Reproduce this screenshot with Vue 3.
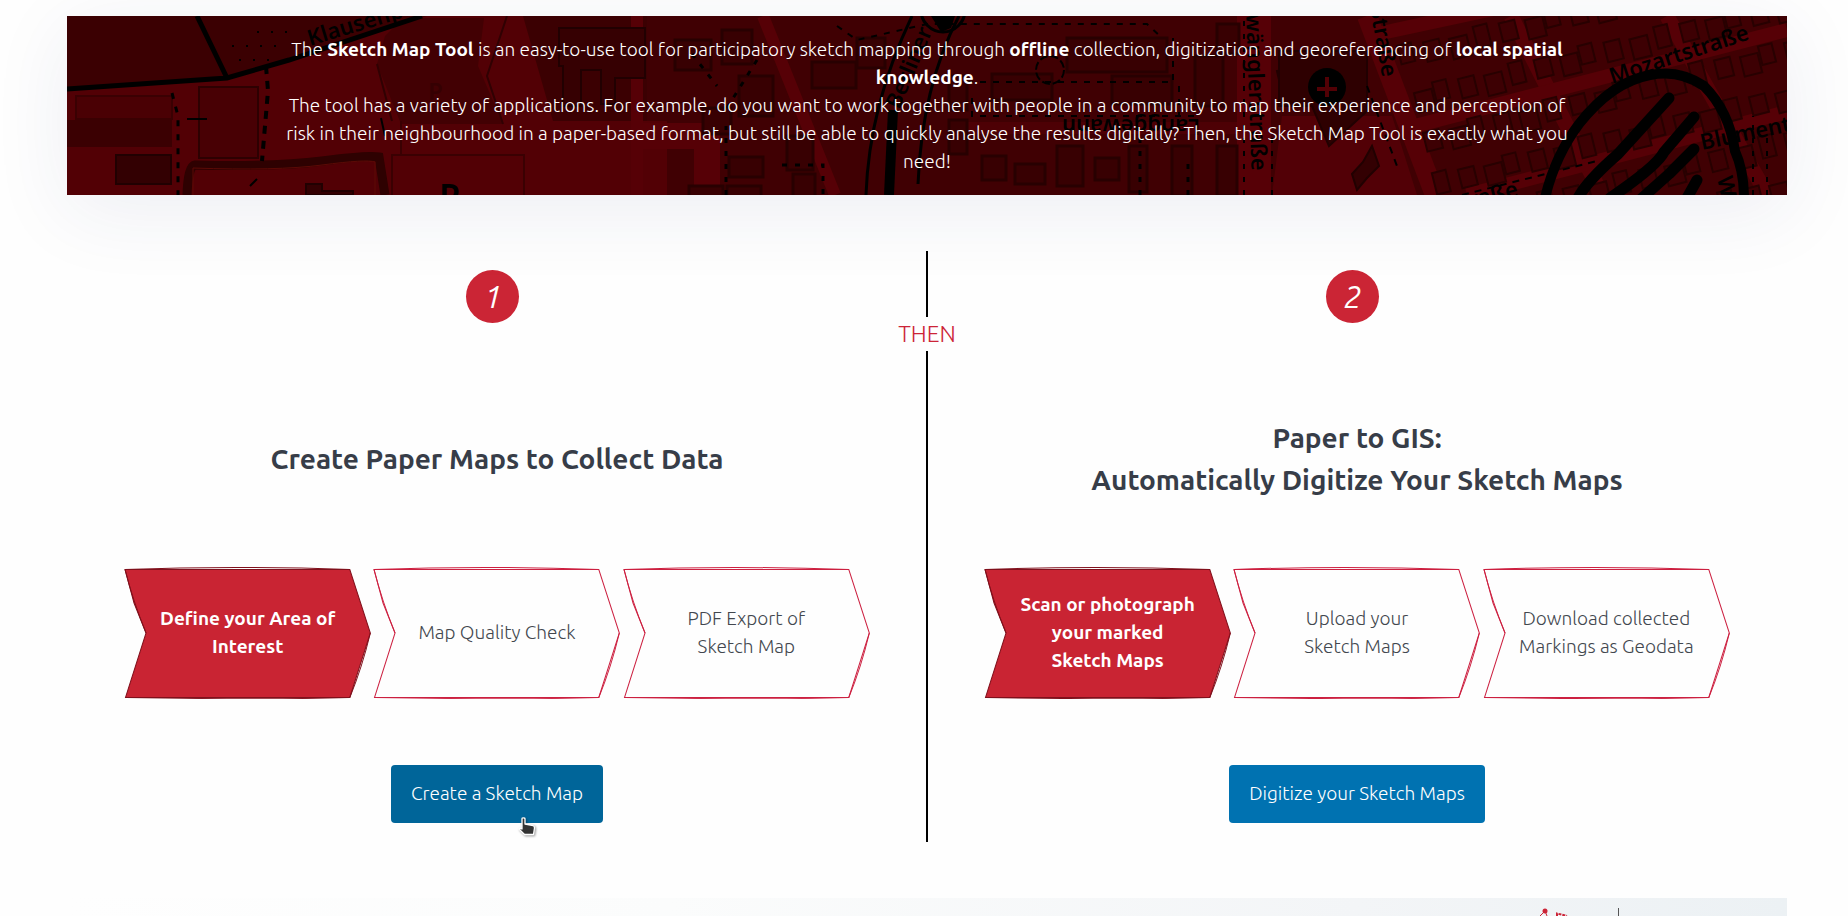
<script setup>
const columns = [
  {
    number: '1',
    title: ['Create Paper Maps to Collect Data'],
    steps: [
      ['Define your Area of', 'Interest'],
      ['Map Quality Check'],
      ['PDF Export of', 'Sketch Map'],
    ],
    action: 'Create a Sketch Map',
    hovered: true,
  },
  {
    number: '2',
    title: ['Paper to GIS:', 'Automatically Digitize Your Sketch Maps'],
    steps: [
      ['Scan or photograph', 'your marked', 'Sketch Maps'],
      ['Upload your', 'Sketch Maps'],
      ['Download collected', 'Markings as Geodata'],
    ],
    action: 'Digitize your Sketch Maps',
    hovered: false,
  },
]

// Rows of small houses along the tilted streets on the right side of the map.
const houses = []
for (let row = 0; row < 6; row++) {
  for (let i = 0; i < 17; i++) {
    const wobble = (i * 7 + row * 5) % 6
    houses.push({
      x: 1345 + i * 25 + wobble,
      y: 28 + row * 44 + (wobble % 3) * 3,
      w: 14 + (wobble % 3) * 2,
      h: 19 + (wobble % 4),
    })
  }
}

const blocks = [
  [608, 24, 36, 30], [655, 14, 30, 34], [672, 60, 34, 40], [636, 92, 28, 26], [662, 141, 34, 20],
  [720, 120, 26, 34], [726, 158, 22, 24], [745, 46, 44, 26], [790, 22, 28, 30], [622, 170, 34, 12],
  [660, 170, 34, 12], [925, 58, 60, 26], [1045, 60, 60, 28], [1000, 22, 100, 34], [915, 140, 24, 24],
  [948, 148, 30, 20], [990, 130, 26, 40], [1028, 142, 24, 22], [1062, 130, 18, 46], [1105, 130, 20, 50],
  [1150, 130, 20, 50], [1128, 40, 28, 50], [1150, 8, 22, 30], [882, 60, 18, 34], [882, 104, 18, 34],
]
</script>

<template>
  <main class="page">
    <section class="banner">
      <svg class="map" viewBox="0 0 1720 179" preserveAspectRatio="xMidYMid slice" aria-hidden="true">
        <rect width="1720" height="179" fill="#520005" />
        <g fill="#3b0002">
          <path d="M0 0H360L160 62L0 73Z" />
          <path d="M318 20L336 2H417L411 50L436 108H334L310 48Z" fill="#420003" />
          <path d="M456 0H580V105H486Z" />
          <path d="M580 0H1720V179H600V105H580Z" fill="#400003" />
          <path d="M0 104H105V131H0Z" />
        </g>
        <g fill="none" stroke="#560006">
          <path d="M570 0V179M696 0L768 179" stroke-width="12" />
          <path d="M573 120H640V179" stroke-width="26" />
          <path d="M1187 0V179" stroke-width="34" />
          <path d="M1300 0L1368 179" stroke-width="20" />
          <path d="M1444 0L1535 179M1600 0L1700 179" stroke-width="15" />
          <path d="M1340 112L1720 14M1310 18L1440 -10M1400 179L1720 96" stroke-width="14" />
          <path d="M900 112H1170" stroke-width="12" opacity=".6" />
        </g>
        <path d="M1215 100H1325L1350 179H1205Z" fill="#520006" />
        <g fill="#330002" stroke="#210001" stroke-width="2">
          <rect x="9" y="80" width="96" height="23" fill="#4a0004" stroke="#3a0002" />
          <rect x="49" y="139" width="55" height="29" />
          <rect x="132" y="71" width="59" height="71" fill="#480004" stroke="#2d0001" />
          <path d="M325 179V139H457V179M334 139V105" fill="none" stroke="#3a0002" />
          <path d="M239 179V168H255V175H286V179Z" />
          <path d="M492 12H578V62H548V88H534V54H514V90H496V50H492Z" fill="#360002" />
          <path d="M1210 55L1235 50L1242 82L1218 90Z" />
          <path d="M1212 35H1300V95L1262 130L1245 90H1212Z" fill="#2e0001" />
          <path d="M1285 158L1296 146L1305 130L1312 150L1300 162L1290 174Z" />
        </g>
        <g fill="#380002" stroke="#280001" stroke-width="3">
          <rect v-for="(b, i) in blocks" :key="i" :x="b[0]" :y="b[1]" :width="b[2]" :height="b[3]" />
        </g>
        <g fill="#3d0003" stroke="#280001" stroke-width="2" transform="rotate(-14 1345 90)">
          <rect v-for="(h, i) in houses" :key="i" :x="h.x" :y="h.y" :width="h.w" :height="h.h" />
        </g>
        <path d="M120 179Q121 150 128 149Q210 151 255 145T312 141L318 179" fill="none" stroke="#2e0101" stroke-width="9" />
        <path d="M126 179V152Q210 155 255 149T308 146V179" fill="none" stroke="#5c0a06" stroke-width="1" />
        <path d="M310 48L325 105M436 108L420 60L440 0" fill="none" stroke="#300002" stroke-width="2" />
        <g fill="none" stroke="#000">
          <path d="M0 73L160 62L222 44L355 0M130 0L160 62" stroke-width="5" />
          <path d="M199 50L201 75L195 145" stroke-width="4" stroke-dasharray="8 7" />
          <path d="M105 77L111 100V179" stroke-width="3" stroke-dasharray="6 8" />
          <path d="M120 103H140M183 170L190 163M314 102L318 120" stroke-width="2" />
          <path d="M165 30H215M172 44H205M190 16H225" stroke-width="2" stroke-dasharray="2 12" />
          <path d="M799 179Q802 90 845 0M851 168Q855 70 892 0" stroke-width="3" />
          <path d="M822 179L826 94" stroke-width="10" />
          <path d="M770 10L790 24L860 8H1080L1095 22M900 66H1106V22M905 82V100H1130M1112 70V100" stroke-width="2" stroke-dasharray="6 7" />
          <path d="M659 179V110M715 149H756V179M625 38L650 70M690 44L660 92M1073 179V120M1121 179V140" stroke-width="3" stroke-dasharray="5 8" />
          <path d="M1177 179V0M1205 179V120M1686 179V100M1700 179V120" stroke-width="2" stroke-dasharray="5 8" />
          <path d="M1395 179L1530 145M1300 70L1330 150" stroke-width="2" stroke-dasharray="7 6" />
          <circle cx="983" cy="54" r="14" stroke-width="2" stroke-dasharray="8 3" />
          <circle cx="876" cy="-6" r="22" stroke-width="3" />
        </g>
        <path d="M864 0H888L884 12L874 16Z" fill="#000" />
        <circle cx="1260" cy="71" r="19" fill="#000" />
        <path d="M1260 61V81M1250 73H1270" stroke="#520005" stroke-width="4" />
        <g class="street">
          <text x="243" y="30" transform="rotate(-17 243 30)">Klausenpfad</text>
          <text x="832" y="94" transform="rotate(-67 832 94)">Berliner</text>
          <text x="1133" y="103" transform="rotate(180 1133 103)">Langgewann</text>
          <text x="1179" y="-2" transform="rotate(88 1179 -2)">wänglerstraße</text>
          <text x="1303" y="-8" transform="rotate(80 1303 -8)">Straße</text>
          <text x="1545" y="68" transform="rotate(-18 1545 68)">Mozartstraße</text>
          <text x="1635" y="134" transform="rotate(-12 1635 134)">Blumenthal</text>
          <text x="1404" y="192" transform="rotate(-14 1404 192)">raße</text>
          <text x="1650" y="162" transform="rotate(78 1650 162)">W</text>
          <text x="372" y="193" class="parking">P</text>
          <text x="361" y="84" class="parking faint">P</text>
        </g>
        <g fill="none" stroke="#000" stroke-linecap="round" stroke-linejoin="round">
          <path d="M1478 182Q1488 140 1512 108Q1545 66 1583 59Q1612 53 1637 70Q1662 95 1668 135Q1677 155 1677 182" stroke-width="10" />
          <path d="M1511 182Q1520 165 1551 138L1602 82M1543 182Q1590 150 1597 136L1627 101M1575 182L1602 158L1627 133M1620 182L1630 164" stroke-width="11" />
        </g>
      </svg>
      <p class="intro">
        The <strong>Sketch Map Tool</strong> is an easy-to-use tool for participatory sketch mapping through
        <strong>offline</strong> collection, digitization and georeferencing of
        <strong>local spatial knowledge</strong>.<br />
        The tool has a variety of applications. For example, do you want to work together with people in a
        community to map their experience and perception of risk in their neighbourhood in a paper-based format,
        but still be able to quickly analyse the results digitally? Then, the Sketch Map Tool is exactly what you
        need!
      </p>
    </section>

    <div class="workflow">
      <template v-for="(col, c) in columns" :key="col.number">
        <div v-if="c" class="divider"><span class="then">THEN</span></div>
        <section class="column">
          <div class="badge-row"><span class="badge">{{ col.number }}</span></div>
          <h2 class="title">
            <span v-for="line in col.title" :key="line">{{ line }}</span>
          </h2>
          <ol class="steps">
            <li v-for="(step, i) in col.steps" :key="i" class="step" :class="{ active: i === 0 }">
              <svg class="arrow" viewBox="0 0 247 132" preserveAspectRatio="none" aria-hidden="true">
                <path class="body" d="M1 2.500H225.500L246 66L225.500 130.500H1.500L22 66L10 36Z" />
                <path class="edge" d="M1 2.500Q110 -1.500 225.500 2.500M1 2.500Q9 34 22 66M246 66Q238 100 225.500 130.500M225.500 130.500Q150 133 1.500 130.500" />
              </svg>
              <span v-for="line in step" :key="line" class="line">{{ line }}</span>
            </li>
          </ol>
          <div class="action">
            <button type="button" class="button" :class="{ hovered: col.hovered }">{{ col.action }}</button>
            <svg v-if="col.hovered" class="pointer" width="18" height="20" viewBox="0 0 18 20" aria-hidden="true">
              <path d="M4 2Q4 .8 5.500 .8T7 2V7L15 8.500Q16.500 9 16.500 11L15.500 17.500H6.500L1 12Q1.500 10.500 4 12Z" fill="#333" stroke="#fff" stroke-width="1.300" stroke-linejoin="round" />
            </svg>
          </div>
        </section>
      </template>
    </div>

    <footer class="footer">
      <svg class="logo" width="84" height="8" viewBox="0 0 84 8" aria-hidden="true">
        <path d="M1 8L6 3L8 8" fill="none" stroke="#cc2437" stroke-width="1" />
        <circle cx="6" cy="3" r="2.500" fill="#cc2437" />
        <path d="M18 8V5.500L28 8" fill="none" stroke="#cc2437" stroke-width="2" stroke-dasharray="3 1" />
        <path d="M79.500 0V8" stroke="#555" />
      </svg>
    </footer>
  </main>
</template>

<style>
html,
body {
  background: #fefefe;
}
</style>

<style scoped>
.page {
  box-sizing: border-box;
  display: flex;
  flex-direction: column;
  min-height: 100vh;
  padding: 16px 61px 0 67px;
  color: #373d48;
  font-family: Ubuntu, "Open Sans", "Noto Sans", sans-serif;
  font-size: 19px;
  font-weight: 300;
  line-height: 28px;
}

.banner {
  position: relative;
  padding: 19px 24px 20px;
  color: #fff;
  text-align: center;
  box-shadow: 0 16px 80px rgba(40, 50, 110, 0.08);
}

.map {
  position: absolute;
  inset: 0;
  width: 100%;
  height: 100%;
}

.street {
  font-family: "Noto Sans", sans-serif;
  font-size: 22px;
  font-weight: 600;
}

.parking {
  font-size: 34px;
}

.faint {
  font-size: 24px;
  fill: #350002;
}

.intro {
  position: relative;
  max-width: 1290px;
  margin: 0 auto;
}

.intro strong {
  font-weight: 600;
}

.workflow {
  display: grid;
  grid-template-columns: 1fr 0 1fr;
  margin: 56px 0;
}

.divider {
  display: flex;
  flex-direction: column;
  align-items: center;
}

.divider::before,
.divider::after {
  content: "";
  width: 2px;
  height: 66px;
  background: #000;
}

.divider::after {
  flex: 1;
}

.then {
  color: #cc2437;
  font-size: 23px;
  line-height: 34px;
}

.column {
  display: flex;
  flex-direction: column;
  padding: 19px 57px;
}

.badge-row {
  display: flex;
  justify-content: center;
  margin-bottom: 28px;
  padding-right: 9px;
}

.badge {
  width: 53px;
  height: 53px;
  border-radius: 50%;
  background: #cb2535;
  color: #fff;
  font-size: 32px;
  font-style: italic;
  font-weight: 400;
  line-height: 53px;
  text-align: center;
}

.title {
  display: flex;
  flex-direction: column;
  justify-content: center;
  min-height: 216px;
  margin: 0;
  font-size: 28px;
  font-weight: 600;
  line-height: 42px;
  text-align: center;
}

.steps {
  display: grid;
  grid-template-columns: repeat(3, 1fr);
  gap: 2px;
  margin: 0 0 66px;
  padding: 0;
  list-style: none;
}

.step {
  position: relative;
  box-sizing: border-box;
  display: flex;
  flex-direction: column;
  align-items: center;
  justify-content: center;
  min-height: 132px;
  padding-bottom: 2px;
  color: #42474e;
}

.step.active {
  color: #fff;
  font-weight: 600;
}

.arrow {
  position: absolute;
  inset: 0;
  width: 100%;
  height: 100%;
}

.body {
  fill: none;
  stroke: #cc2040;
}

.edge {
  fill: none;
  stroke: #cc2040;
}

.active .body {
  fill: #c92433;
  stroke: #80101c;
}

.active .edge {
  stroke: #80101c;
}

.line {
  position: relative;
  white-space: nowrap;
}

.action {
  position: relative;
  align-self: center;
}

.button {
  display: block;
  height: 58px;
  padding: 0 20px 2px;
  border: 0;
  border-radius: 4px;
  background: #0072b1;
  color: #fff;
  font: inherit;
  cursor: pointer;
}

.button.hovered {
  background: #006599;
}

.pointer {
  position: absolute;
  top: 52px;
  left: 127px;
  filter: drop-shadow(1px 1px 1px rgba(0, 0, 0, 0.4));
}

.footer {
  display: flex;
  flex: 1;
  align-items: flex-end;
  justify-content: flex-end;
  padding-right: 164px;
  background: linear-gradient(90deg, #fefefe, #fbfcfc 35%, #f3f5f7 75%, #ecf1f4);
}

.logo {
  display: block;
}
</style>
